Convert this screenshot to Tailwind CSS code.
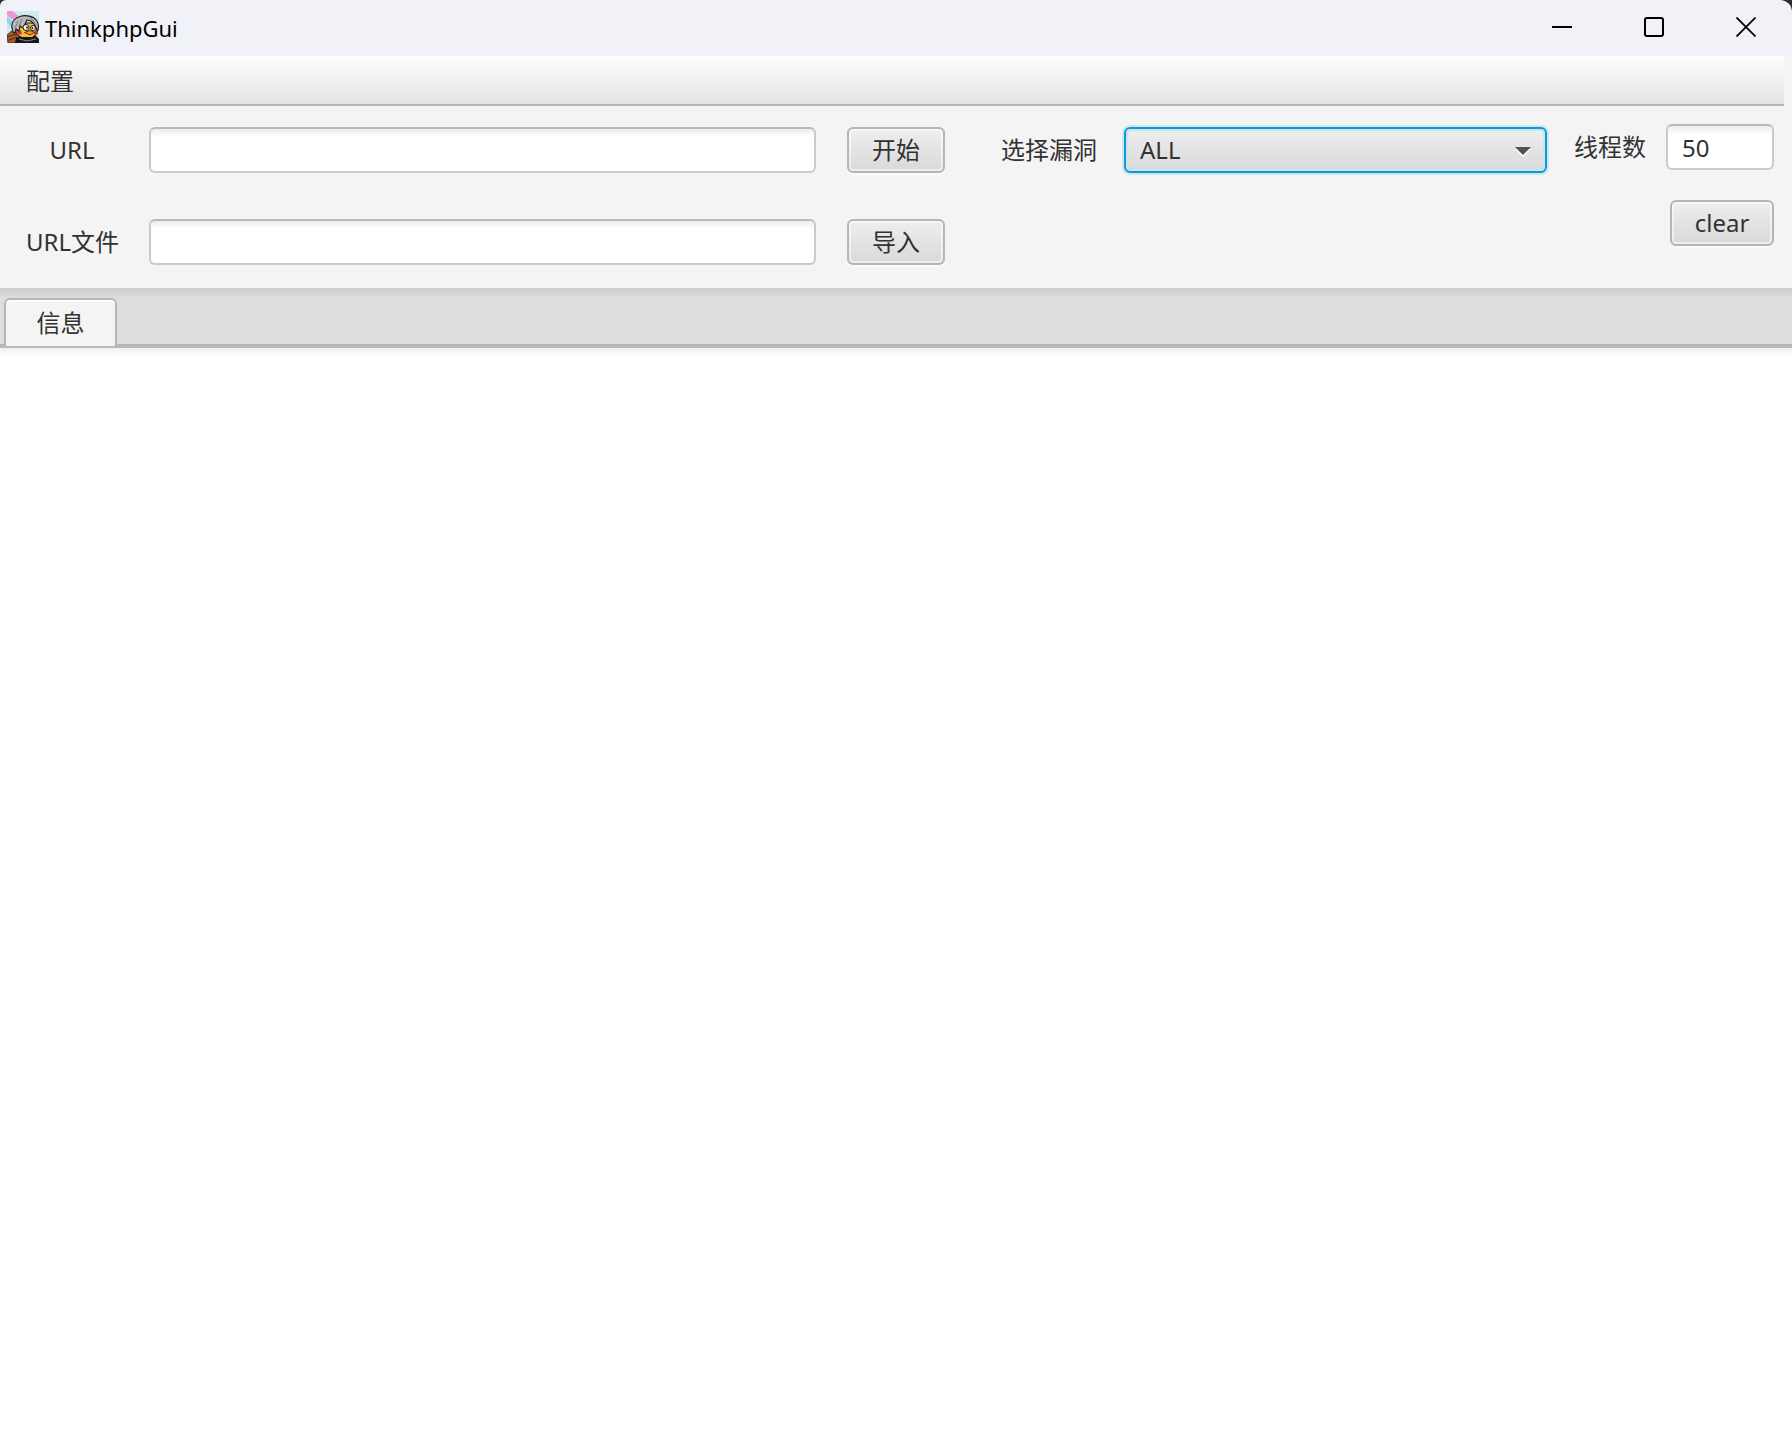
<!DOCTYPE html>
<html lang="zh-CN">
<head>
<meta charset="utf-8">
<meta name="viewport" content="width=device-width, initial-scale=1">
<title>ThinkphpGui</title>
<script src="https://cdn.jsdelivr.net/npm/@tailwindcss/browser@4"></script>
</head>
<body class="flex min-h-screen flex-col bg-[#2e2e30] font-['Noto_Sans','Noto_Sans_CJK_SC',sans-serif] text-2xl leading-8 text-[#323232]">

  <!-- Title bar -->
  <header class="flex h-14 items-center rounded-tl-[6px] rounded-tr-xl bg-[#f0f2f8] pl-[7px] text-black">
    <svg class="mb-0.5 size-8 shrink-0" viewBox="0 0 32 32" aria-hidden="true">
      <rect width="32" height="32" fill="#cdeaec"/>
      <path d="M0 5 14 19V22H0Z" fill="#8fd5ee"/>
      <path d="M0 11 9 22H0Z" fill="#cdeaec"/>
      <path d="M0 0H5L14 7 9 11 0 4Z" fill="#ee93d6"/>
      <path d="M0 24 4 20.500 9 21 10 32H1Z" fill="#a35a2c" stroke="#4a2410" stroke-width=".8"/>
      <path d="M0 26 9 23M1 29.500 10 26" stroke="#4a2410" stroke-width=".9" fill="none"/>
      <path d="M9 27 13 24H28L32 28V32H8Z" fill="#17171b"/>
      <path d="M12 28 20 30 29 28" stroke="#85858e" stroke-width="1.200" fill="none"/>
      <path d="M10 18 14 12H27L30 18V23L25 26.500H15L10 24Z" fill="#f5c02f" stroke="#1b1410" stroke-width="1"/>
      <path d="M10 19.500 14 19.500 15 23 11 24ZM27.500 20H31L30 24 27.500 23.500Z" fill="#ee2b22"/>
      <path d="M5 17C4 11 8 7 13 5.500 18 3.500 27 5 30 10 32 14 31.500 18 30.500 20L28 14 24 10 20 9 18 13 16 17 13 15 12 20 9 18 8 22 6 21Z" fill="#b9b8be" stroke="#1d1c20" stroke-width="1.100"/>
      <path d="M8 17 11 10M12 15 15 8M23 6 28 12" stroke="#77767e" stroke-width="1" fill="none"/>
      <circle cx="19" cy="16.500" r="3" fill="#fff" stroke="#17171b"/>
      <circle cx="26" cy="17" r="2.500" fill="#fff" stroke="#17171b"/>
      <circle cx="20" cy="16.500" r="1" fill="#17171b"/>
      <circle cx="25.500" cy="17" r=".9" fill="#17171b"/>
      <path d="M17.500 21.500 23 19.500 28 21.500 23 24Z" fill="#f68f1e" stroke="#3a1c0c" stroke-width=".8"/>
    </svg>
    <h1 class="ml-1.5 flex-1 text-[22px]">ThinkphpGui</h1>
    <button type="button" aria-label="最小化" class="flex h-14 w-[92px] items-center justify-center pb-0.5">
      <svg class="size-5" viewBox="0 0 20 20"><path d="M0 10H20" stroke="#000" stroke-width="2"/></svg>
    </button>
    <button type="button" aria-label="最大化" class="flex h-14 w-[92px] items-center justify-center pb-0.5">
      <svg class="size-5" viewBox="0 0 20 20"><rect x="1" y="1" width="18" height="18" rx="2" fill="none" stroke="#000" stroke-width="2"/></svg>
    </button>
    <button type="button" aria-label="关闭" class="flex h-14 w-[92px] items-center justify-center pb-0.5">
      <svg class="size-5" viewBox="0 0 20 20"><path d="M.5.5 19.500 19.500M19.500.5.5 19.500" stroke="#000" stroke-width="1.800"/></svg>
    </button>
  </header>

  <main class="flex flex-1 flex-col bg-[#f4f4f4]">
    <nav class="mr-2 flex h-[50px] items-center border-b-2 border-[#b5b5b5] bg-linear-to-b from-[#fdfdfd] to-[#e3e3e3] pt-0.5 pl-[26px]">
      <button type="button">配置</button>
    </nav>

    <form class="flex h-[182px] items-start pr-[18px] pl-[26px]">
      <div class="mt-[21px] grid flex-1 grid-cols-[92px_1fr_98px] items-center gap-x-[31px] gap-y-[46px]">
        <label for="url" class="text-center whitespace-nowrap">URL</label>
        <input id="url" type="text" class="h-[46px] w-full min-w-0 rounded-md border-2 border-[#cacaca] border-t-[#b9b9b9] bg-linear-to-b from-[#ececec] to-white to-[8px] px-3.5 outline-none">
        <button type="button" class="h-[46px] rounded-md border-2 border-[#b5b5b5] bg-linear-to-b from-[#eeeeee] to-[#d9d9d9] shadow-[0_2px_0_#fafafa,inset_0_0_0_2px_rgba(255,255,255,0.5)]">开始</button>
        <label for="file" class="text-center whitespace-nowrap">URL文件</label>
        <input id="file" type="text" class="h-[46px] w-full min-w-0 rounded-md border-2 border-[#cacaca] border-t-[#b9b9b9] bg-linear-to-b from-[#ececec] to-white to-[8px] px-3.5 outline-none">
        <button type="button" class="h-[46px] rounded-md border-2 border-[#b5b5b5] bg-linear-to-b from-[#eeeeee] to-[#d9d9d9] shadow-[0_2px_0_#fafafa,inset_0_0_0_2px_rgba(255,255,255,0.5)]">导入</button>
      </div>

      <div class="mt-[21px] ml-14 flex items-center gap-[27px]">
        <label for="vuln" class="whitespace-nowrap">选择漏洞</label>
        <div class="relative">
          <select id="vuln" class="block h-[46px] w-[423px] appearance-none rounded-md border-2 border-[#039ed3] bg-linear-to-b from-[#eeeeee] to-[#d9d9d9] px-3.5 shadow-[0_0_0_2px_#d0e6ee,inset_0_0_0_2px_#cfe2ea] outline-none">
            <option>ALL</option>
          </select>
          <svg class="pointer-events-none absolute top-5 right-4 h-2.5 w-4" viewBox="0 0 16 10" aria-hidden="true">
            <path d="M0 2H16L8 10Z" fill="#fff"/><path d="M0 0H16L8 8Z" fill="#515151"/>
          </svg>
        </div>
      </div>

      <div class="mt-[18px] ml-[27px] flex flex-col items-end gap-[30px]">
        <div class="flex items-center gap-5">
          <label for="threads" class="whitespace-nowrap">线程数</label>
          <input id="threads" type="text" value="50" class="h-[46px] w-[108px] rounded-md border-2 border-[#cacaca] border-t-[#b9b9b9] bg-linear-to-b from-[#ececec] to-white to-[8px] px-3.5 outline-none">
        </div>
        <button type="button" class="h-[46px] w-[104px] rounded-md border-2 border-[#b5b5b5] bg-linear-to-b from-[#eeeeee] to-[#d9d9d9] shadow-[0_2px_0_#fafafa,inset_0_0_0_2px_rgba(255,255,255,0.5)]">clear</button>
      </div>
    </form>

    <div role="tablist" class="flex h-[60px] items-end border-b-2 border-[#bababa] bg-linear-to-b from-[#cccccc] to-[#dddddd] to-[10px] pl-1 shadow-[inset_0_-2px_0_#b5b5b5]">
      <button type="button" role="tab" aria-selected="true" aria-controls="info" class="h-12 w-[113px] rounded-t-md border-2 border-b-0 border-[#b5b5b5] bg-[#f4f4f4] shadow-[inset_0_2px_0_#ffffff]">信息</button>
    </div>
    <section id="info" role="tabpanel" aria-label="信息" class="flex-1 bg-linear-to-b from-[#f0f0f0] to-white to-[9px]"></section>
  </main>
</body>
</html>
